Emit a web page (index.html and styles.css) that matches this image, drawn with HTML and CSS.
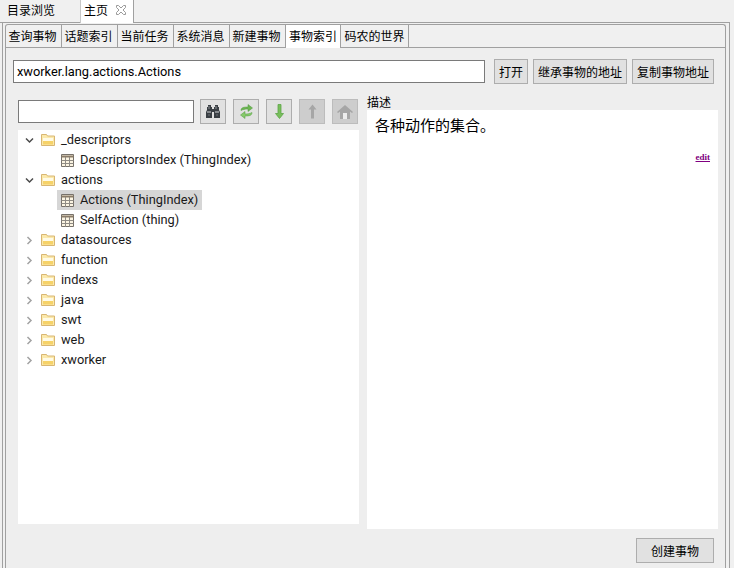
FILE: index.html
```html
<!DOCTYPE html>
<html lang="zh">
<head>
<meta charset="utf-8">
<title>主页</title>
<link rel="stylesheet" href="styles.css">
</head>
<body>
<div class="app">
  <div class="top-tabs">
    <div class="top-tab">目录浏览</div>
    <div class="top-tab active">主页
      <svg class="close" width="10" height="10" viewBox="0 0 10 10"><path d="M.5.5h2L5 3 7.500.5h2v2L7 5l2.500 2.500v2h-2L5 7 2.500 9.500h-2v-2L3 5 .5 2.500z" fill="#fff" stroke="#9a9a9a"/></svg>
    </div>
  </div>
  <div class="outer">
    <div class="panel">
      <div class="sub-tabs">
        <div class="sub-tab">查询事物</div>
        <div class="sub-tab">话题索引</div>
        <div class="sub-tab">当前任务</div>
        <div class="sub-tab">系统消息</div>
        <div class="sub-tab">新建事物</div>
        <div class="sub-tab active">事物索引</div>
        <div class="sub-tab wide">码农的世界</div>
      </div>
      <div class="pane">
        <div class="address">
          <div class="input address-input">xworker.lang.actions.Actions</div>
          <button class="btn open">打开</button>
          <button class="btn inherit">继承事物的地址</button>
          <button class="btn copy">复制事物地址</button>
        </div>
        <div class="columns">
          <div class="left">
            <div class="toolbar">
              <div class="input search"></div>
              <button class="tool"><svg width="14" height="13" viewBox="0 0 14 13"><path d="M2 0h3v2h1v2h2V2h1V0h3v2h1v3l1 2v6H8V7H6v6H0V7l1-2V2h1z" fill="#3a3f44"/><path d="M1 7h4M9 7h4" stroke="#d5d7d9"/><path d="M3 1v3M10 1v3" stroke="#8d9195"/><path d="M2 10h2M10 10h2" stroke="#6d7276"/></svg></button>
              <button class="tool"><svg width="13" height="15" viewBox="0 0 13 15"><path d="M1 6.500C1 3.500 3.500 3 8 3V.5L12.500 4 8 7.500V5C5 5 3 5.500 1 6.500z" fill="#6db552" stroke="#4f9a3c" stroke-width=".5"/><path d="M12 8.500c0 3-2.500 3.500-7 3.500v2.500L.5 11 5 7.500V10c3 0 5-.5 7-1.500z" fill="#86c96a" stroke="#4f9a3c" stroke-width=".5"/></svg></button>
              <button class="tool"><svg width="9" height="15" viewBox="0 0 9 15"><path d="M3 .5h3v9h2.500l-4 5-4-5H3z" fill="#78bf5c" stroke="#5da546" stroke-width=".8"/></svg></button>
              <button class="tool off"><svg width="9" height="15" viewBox="0 0 9 15"><path d="M3 14.500h3v-9h2.500l-4-5-4 5H3z" fill="#a6a6a6"/></svg></button>
              <button class="tool off"><svg width="16" height="14" viewBox="0 0 16 14"><path d="M8 0 0 7l1 1 2-1.500V14h10V6.500L15 8l1-1z" fill="#a6a6a6"/><path d="M6 8h4v6H6z" fill="#ededed"/></svg></button>
            </div>
            <div class="tree">
              <div class="row"><svg class="twist" viewBox="0 0 9 9"><path d="M1 2.500 4.500 6 8 2.500"/></svg><svg class="folder" viewBox="0 0 14 12"><use href="#folder"/></svg><span>_descriptors</span></div>
              <div class="row child"><div class="item"><svg class="table" viewBox="0 0 13 13"><use href="#table"/></svg><span>DescriptorsIndex (ThingIndex)</span></div></div>
              <div class="row"><svg class="twist" viewBox="0 0 9 9"><path d="M1 2.500 4.500 6 8 2.500"/></svg><svg class="folder" viewBox="0 0 14 12"><use href="#folder"/></svg><span>actions</span></div>
              <div class="row child"><div class="item selected"><svg class="table" viewBox="0 0 13 13"><use href="#table"/></svg><span>Actions (ThingIndex)</span></div></div>
              <div class="row child"><div class="item"><svg class="table" viewBox="0 0 13 13"><use href="#table"/></svg><span>SelfAction (thing)</span></div></div>
              <div class="row"><svg class="twist closed" viewBox="0 0 9 9"><path d="M2.500 1 6 4.500 2.500 8"/></svg><svg class="folder" viewBox="0 0 14 12"><use href="#folder"/></svg><span>datasources</span></div>
              <div class="row"><svg class="twist closed" viewBox="0 0 9 9"><path d="M2.500 1 6 4.500 2.500 8"/></svg><svg class="folder" viewBox="0 0 14 12"><use href="#folder"/></svg><span>function</span></div>
              <div class="row"><svg class="twist closed" viewBox="0 0 9 9"><path d="M2.500 1 6 4.500 2.500 8"/></svg><svg class="folder" viewBox="0 0 14 12"><use href="#folder"/></svg><span>indexs</span></div>
              <div class="row"><svg class="twist closed" viewBox="0 0 9 9"><path d="M2.500 1 6 4.500 2.500 8"/></svg><svg class="folder" viewBox="0 0 14 12"><use href="#folder"/></svg><span>java</span></div>
              <div class="row"><svg class="twist closed" viewBox="0 0 9 9"><path d="M2.500 1 6 4.500 2.500 8"/></svg><svg class="folder" viewBox="0 0 14 12"><use href="#folder"/></svg><span>swt</span></div>
              <div class="row"><svg class="twist closed" viewBox="0 0 9 9"><path d="M2.500 1 6 4.500 2.500 8"/></svg><svg class="folder" viewBox="0 0 14 12"><use href="#folder"/></svg><span>web</span></div>
              <div class="row"><svg class="twist closed" viewBox="0 0 9 9"><path d="M2.500 1 6 4.500 2.500 8"/></svg><svg class="folder" viewBox="0 0 14 12"><use href="#folder"/></svg><span>xworker</span></div>
            </div>
          </div>
          <div class="right">
            <div class="label">描述</div>
            <div class="desc">
              <div class="desc-text">各种动作的集合。</div>
              <div class="edit-line"><a class="edit" href="#">edit</a></div>
            </div>
          </div>
        </div>
        <div class="footer"><button class="btn create">创建事物</button></div>
      </div>
    </div>
  </div>
</div>
<svg class="defs" width="0" height="0">
  <defs>
    <g id="folder">
      <path d="M.5 11.500V.5h5l1 1.500h7v9.500z" fill="#fbe9ab" stroke="#d8b672"/>
      <path d="M2 4h10v3H2z" fill="#fffbe8"/>
      <path d="M2 7h10v3.500H2z" fill="#f6d268"/>
    </g>
    <g id="table">
      <path d="M.5.500h12v12H.500z" fill="#fbf4e2" stroke="#77716a"/>
      <path d="M.5 2.500h12" stroke="#8b7c68" stroke-width="2"/>
      <path d="M.5 6.500h12M.5 9.500h12M4.500 3v10M8.500 3v10" stroke="#8f8b84"/>
    </g>
  </defs>
</svg>
</body>
</html>
```
FILE: styles.css
```css
* { box-sizing: border-box; }
html, body { margin: 0; height: 100%; }
body {
  background: #f0f0f0;
  font-family: "Noto Sans CJK SC", "Liberation Sans", sans-serif;
  font-size: 12px;
  color: #000;
  overflow: hidden;
}
.app { width: 734px; height: 568px; display: flex; flex-direction: column; }
.defs { position: absolute; }
.top-tabs { height: 23px; display: flex; border-bottom: 1px solid #a0a0a0; flex: none; margin-right: 4px; }
.top-tab { width: 80px; padding: 1px 0 0 7px; line-height: 17px; }
.top-tab.active {
  width: 54px; padding-left: 3px;
  background: #fff; border-left: 1px solid #c8c8c8; border-right: 1px solid #a0a0a0;
  height: 23px; display: flex; align-items: flex-start; gap: 8px;
}
.close { margin-top: 4px; }
.outer {
  flex: 1; min-height: 0; margin: 0 4px 0 2px; padding: 1px 3px 0 2px;
  border-left: 1px solid #a0a0a0; border-right: 1px solid #a0a0a0;
  display: flex;
}
.panel {
  flex: 1; min-width: 0; display: flex; flex-direction: column;
  border: 1px solid #a0a0a0; border-bottom: 0; border-radius: 3px 3px 0 0;
}
.sub-tabs { height: 23px; display: flex; flex: none; border-bottom: 1px solid #a0a0a0; }
.sub-tab { width: 56px; padding-right: 2px; text-align: center; border-right: 1px solid #a0a0a0; line-height: 22px; white-space: nowrap; }
.sub-tab.wide { width: 68px; padding-right: 0; }
.sub-tab.active { background: #fff; height: 23px; width: 55px; padding-right: 0; }
.pane { flex: 1; min-height: 0; display: flex; flex-direction: column; background: #eee; }
.input { background: #fff; border: 1px solid #7a7a7a; }
.address { display: flex; align-items: center; padding: 11px 0 0 7px; flex: none; }
.address-input { width: 472px; height: 23px; font-family: Roboto, sans-serif; font-size: 12.800px; line-height: 21px; padding-left: 3px; margin-right: 9px; }
.btn {
  height: 25px; padding: 0; margin-right: 5px;
  background: #e1e1e1; border: 1px solid #adadad; border-radius: 0;
  font: 12px "Noto Sans CJK SC", sans-serif; color: #000;
}
.open { width: 34px; }
.inherit { width: 94px; }
.copy { width: 82px; }
.columns { flex: 1; min-height: 0; display: flex; padding: 11px 7px 0 12px; gap: 8px; }
.left { width: 341px; display: flex; flex-direction: column; padding: 4px 0 5px; }
.toolbar { height: 31px; display: flex; align-items: flex-start; gap: 7px; flex: none; }
.search { width: 176px; height: 23px; margin: 1px -1px 0 0; }
.tool { width: 26px; height: 25px; padding: 0; background: #e1e1e1; border: 1px solid #adadad; display: flex; align-items: center; justify-content: center; }
.tool.off { background: #cdcdcd; border-color: #bcbcbc; }
.tree { flex: 1; background: #fff; font-family: Roboto, sans-serif; font-size: 12.800px; color: #1a1a1a; }
.row { height: 20px; display: flex; align-items: center; padding-left: 7px; }
.row span { margin-bottom: 2px; }
.row.child { padding-left: 39px; }
.twist { width: 9px; height: 9px; margin-right: 7px; flex: none; }
.twist path { fill: none; stroke: #4a4a4a; stroke-width: 1.500; }
.twist.closed path { stroke: #a2a2a2; }
.folder { width: 14px; height: 12px; margin-right: 6px; flex: none; }
.item { display: flex; align-items: center; height: 20px; padding: 0 4px; }
.table { width: 13px; height: 13px; margin-right: 6px; flex: none; }
.selected { background: #d6d6d6; }
.right { flex: 1; display: flex; flex-direction: column; }
.label { height: 15px; line-height: 13px; }
.desc { flex: 1; background: #fff; padding: 5px 8px; }
.desc-text { font-size: 15px; line-height: 20px; }
.edit-line { display: flex; justify-content: flex-end; margin-top: 17px; }
.edit { font: bold 9px "Liberation Serif", serif; color: #800080; line-height: 10px; }
.footer { height: 39px; display: flex; justify-content: flex-end; align-items: flex-start; padding: 9px 11px 0 0; flex: none; }
.create { width: 78px; margin-right: 0; }
```
